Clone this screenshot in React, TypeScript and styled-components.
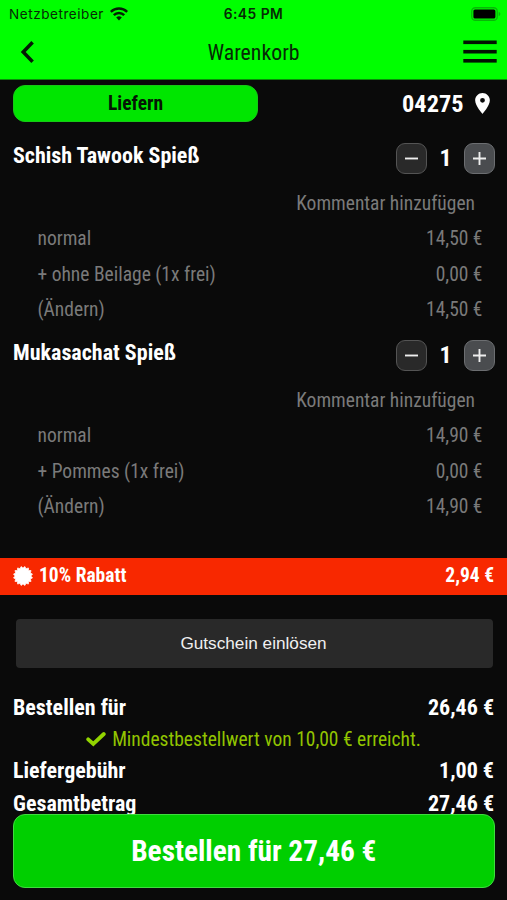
import React from "react";
import styled, { createGlobalStyle } from "styled-components";

const Global = createGlobalStyle`
  * { box-sizing: border-box; }
  body { margin: 0; background: #0a0a0a; }
`;

const Screen = styled.div`
  width: 507px;
  height: 900px;
  display: flex;
  flex-direction: column;
  overflow: hidden;
  background: #0a0a0a;
  color: #fff;
  font-family: Roboto, "Liberation Sans", sans-serif;
  font-stretch: 75%;
`;

const Text = styled.span<{ $size: number; $bold?: boolean }>`
  display: inline-block;
  white-space: nowrap;
  font-size: ${(p) => p.$size}px;
  font-weight: ${(p) => (p.$bold ? 700 : 400)};
`;

const Header = styled.header`
  flex: none;
  height: 80px;
  background: #00ff00;
  border-bottom: 1px solid #078f07;
  color: #062a06;
`;

const StatusBar = styled.div`
  display: grid;
  grid-template-columns: 1fr auto 1fr;
  align-items: center;
  height: 27px;
  padding: 0 6px 0 9px;
  font-family: Inter, sans-serif;
  font-stretch: 100%;
`;

const Carrier = styled.div`
  display: flex;
  align-items: center;
  gap: 6px;
  font-size: 13.5px;
  letter-spacing: 0.56px;
`;

const Clock = styled.div`
  margin-right: 3px;
  font-size: 13.8px;
  font-weight: 600;
  letter-spacing: 0.5px;
`;

const BatterySlot = styled.div`
  display: flex;
  justify-content: flex-end;
`;

const NavBar = styled.nav`
  display: grid;
  grid-template-columns: 1fr auto 1fr;
  align-items: center;
  height: 50px;
  padding: 0 10px 0 20px;
`;

const Title = styled.div`
  margin-right: 10px;
`;

const MenuSlot = styled.div`
  display: flex;
  justify-content: flex-end;
`;

const Scroll = styled.main`
  flex: 1;
  min-height: 0;
  overflow: hidden;
`;

const DeliveryRow = styled.div`
  display: flex;
  justify-content: space-between;
  align-items: center;
  height: 60px;
  padding: 5px 17px 18px 13px;
`;

const ModeButton = styled.button`
  width: 245px;
  height: 37px;
  padding: 0;
  border: 1px solid #16c916;
  border-radius: 12px;
  background: #00e600;
  color: #041504;
  font: inherit;
`;

const Zip = styled.div`
  display: flex;
  align-items: center;
  gap: 11.5px;
`;

const Item = styled.section`
  height: 197px;
`;

const ItemHead = styled.div`
  display: flex;
  justify-content: space-between;
  height: 46px;
  padding: 0 12px 0 13px;
  line-height: 32px;
`;

const Stepper = styled.div`
  display: flex;
  align-items: center;
  height: 31px;
  margin-top: 3px;
`;

const Count = styled.div`
  width: 37px;
  padding-top: 2px;
  text-align: center;
`;

const StepButton = styled.button<{ $active?: boolean }>`
  display: flex;
  align-items: center;
  justify-content: center;
  width: 31px;
  height: 31px;
  padding: 0;
  border: 1px solid ${(p) => (p.$active ? "#6c6e71" : "#545454")};
  border-radius: 9px;
  background: ${(p) => (p.$active ? "#4a4c4f" : "#292929")};
`;

const Line = styled.div<{ $end?: boolean }>`
  display: flex;
  justify-content: ${(p) => (p.$end ? "flex-end" : "space-between")};
  height: 35.4px;
  line-height: 35.4px;
  padding: 0 ${(p) => (p.$end ? 32 : 24.5)}px 0 37.5px;
  color: #7a7a7a;
`;

const Discount = styled.div`
  display: flex;
  justify-content: space-between;
  align-items: center;
  height: 36.5px;
  margin-top: 24px;
  padding: 0 13px;
  line-height: 36px;
  background: #f82800;
`;

const DiscountName = styled.div`
  display: flex;
  align-items: center;
  gap: 6px;
`;

const Voucher = styled.button`
  display: block;
  width: 477px;
  height: 49px;
  margin: 24.5px 0 0 15.5px;
  padding: 0 1px 0 0;
  border: 0;
  border-radius: 4px;
  background: #292929;
  color: #f0f0f0;
  font: 17.2px "Liberation Sans", sans-serif;
`;

const Totals = styled.div`
  padding: 24px 13px 0;
`;

const TotalRow = styled.div<{ $h: number }>`
  display: flex;
  justify-content: space-between;
  height: ${(p) => p.$h}px;
  line-height: ${(p) => p.$h}px;
`;

const Minimum = styled.div`
  display: flex;
  align-items: center;
  justify-content: center;
  gap: 6px;
  height: 31px;
  line-height: 31px;
  color: #92c400;
`;

const Footer = styled.footer`
  flex: none;
  height: 86px;
  padding: 0 12.5px 0 13px;
`;

const OrderButton = styled.button`
  display: block;
  width: 100%;
  height: 74px;
  padding: 0;
  border: 1px solid #3fdc3f;
  border-radius: 12px;
  background: #00cf00;
  color: #fff;
  font: inherit;
`;

const Icon = styled.svg`
  display: block;
  flex: none;
`;

const WifiIcon = () => (
  <Icon width="18" height="14" viewBox="0 0 18 14" fill="none" stroke="#042004" strokeWidth="2.4">
    <path d="M.8 4.9a11.5 11.5 0 0 1 16.4 0" />
    <path d="M3.8 8.2a7.3 7.3 0 0 1 10.4 0" />
    <path d="M6.2 10.6a4 4 0 0 1 5.6 0L9 13.5z" fill="#042004" stroke="none" />
  </Icon>
);

const BatteryIcon = () => (
  <Icon width="30" height="14" viewBox="0 0 30 14">
    <rect x="0.75" y="0.75" width="25.5" height="12.5" rx="3.6" fill="none" stroke="#08b808" strokeWidth="1.3" />
    <rect x="2.4" y="2.5" width="22" height="9" rx="1.6" fill="#000" />
    <path d="M27.7 5v4c1-.4 1.6-1.1 1.6-2s-.6-1.6-1.6-2z" fill="#08b808" />
  </Icon>
);

const BackIcon = () => (
  <Icon width="16" height="24" viewBox="0 0 16 24" fill="none" stroke="#041a04" strokeWidth="3.5">
    <path d="M12.6 2.2 3.2 12l9.4 9.8" />
  </Icon>
);

const MenuIcon = () => (
  <Icon width="34" height="24" viewBox="0 0 34 24" fill="#021402">
    <rect x="0.3" y="0.5" width="33.4" height="3.6" />
    <rect x="0.3" y="9.9" width="33.4" height="3.6" />
    <rect x="0.3" y="19" width="33.4" height="3.6" />
  </Icon>
);

const PinIcon = () => (
  <Icon width="15" height="21" viewBox="5 2 14 20" fill="#fff">
    <path d="M12 2C8.13 2 5 5.13 5 9c0 5.25 7 13 7 13s7-7.75 7-13c0-3.87-3.13-7-7-7zm0 9.3a2.3 2.3 0 0 1 0-4.6 2.3 2.3 0 0 1 0 4.6z" />
  </Icon>
);

const burst = Array.from({ length: 32 }, (_, i) => {
  const r = i % 2 ? 7.9 : 9.7;
  const a = ((i + 1) * Math.PI) / 16;
  return `${(10 + r * Math.sin(a)).toFixed(2)},${(10 - r * Math.cos(a)).toFixed(2)}`;
}).join(" ");

const BurstIcon = () => (
  <Icon width="20" height="20" viewBox="0 0 20 20" fill="#fff" stroke="#fff" strokeWidth="0.7" strokeLinejoin="round">
    <polygon points={burst} />
  </Icon>
);

const CheckIcon = () => (
  <Icon width="20" height="16" viewBox="0 0 20 16" fill="none" stroke="#92d400" strokeWidth="3.8" strokeLinecap="round">
    <path d="M2.2 8.3 7.3 12.9 17.8 3" strokeLinejoin="miter" />
  </Icon>
);

const SignIcon = ({ plus }: { plus?: boolean }) => (
  <Icon width="15" height="15" viewBox="0 0 15 15" stroke="#eee" strokeWidth="1.9">
    <path d={plus ? "M1 7.5h13M7.5 1v13" : "M1 7.5h13"} />
  </Icon>
);

const items = [
  { name: "Schish Tawook Spieß", price: "14,50 €", extra: "+ ohne Beilage (1x frei)" },
  { name: "Mukasachat Spieß", price: "14,90 €", extra: "+ Pommes (1x frei)" },
];

const Detail = ({ label, price }: { label: string; price: string }) => (
  <Line>
    <Text $size={19.5}>{label}</Text>
    <Text $size={19.5}>{price}</Text>
  </Line>
);

const Total = ({ label, value, h }: { label: string; value: string; h: number }) => (
  <TotalRow $h={h}>
    <Text $size={22} $bold>{label}</Text>
    <Text $size={22} $bold>{value}</Text>
  </TotalRow>
);

export default function App() {
  return (
    <Screen>
      <Global />
      <Header>
        <StatusBar>
          <Carrier>Netzbetreiber<WifiIcon /></Carrier>
          <Clock>6:45 PM</Clock>
          <BatterySlot><BatteryIcon /></BatterySlot>
        </StatusBar>
        <NavBar>
          <BackIcon />
          <Title><Text $size={21.8}>Warenkorb</Text></Title>
          <MenuSlot><MenuIcon /></MenuSlot>
        </NavBar>
      </Header>
      <Scroll>
        <DeliveryRow>
          <ModeButton><Text $size={19.5} $bold>Liefern</Text></ModeButton>
          <Zip><Text $size={24.3} $bold>04275</Text><PinIcon /></Zip>
        </DeliveryRow>
        {items.map((item) => (
          <Item key={item.name}>
            <ItemHead>
              <Text $size={22} $bold>{item.name}</Text>
              <Stepper>
                <StepButton><SignIcon /></StepButton>
                <Count><Text $size={24} $bold>1</Text></Count>
                <StepButton $active><SignIcon plus /></StepButton>
              </Stepper>
            </ItemHead>
            <Line $end><Text $size={19.5}>Kommentar hinzufügen</Text></Line>
            <Detail label="normal" price={item.price} />
            <Detail label={item.extra} price="0,00 €" />
            <Detail label="(Ändern)" price={item.price} />
          </Item>
        ))}
        <Discount>
          <DiscountName><BurstIcon /><Text $size={19.5} $bold>10% Rabatt</Text></DiscountName>
          <Text $size={19.5} $bold>2,94 €</Text>
        </Discount>
        <Voucher>Gutschein einlösen</Voucher>
        <Totals>
          <Total label="Bestellen für" value="26,46 €" h={31.5} />
          <Minimum><CheckIcon /><Text $size={19.5}>Mindestbestellwert von 10,00 € erreicht.</Text></Minimum>
          <Total label="Liefergebühr" value="1,00 €" h={32} />
          <Total label="Gesamtbetrag" value="27,46 €" h={33} />
        </Totals>
      </Scroll>
      <Footer>
        <OrderButton><Text $size={29.3} $bold>Bestellen für 27,46 €</Text></OrderButton>
      </Footer>
    </Screen>
  );
}
